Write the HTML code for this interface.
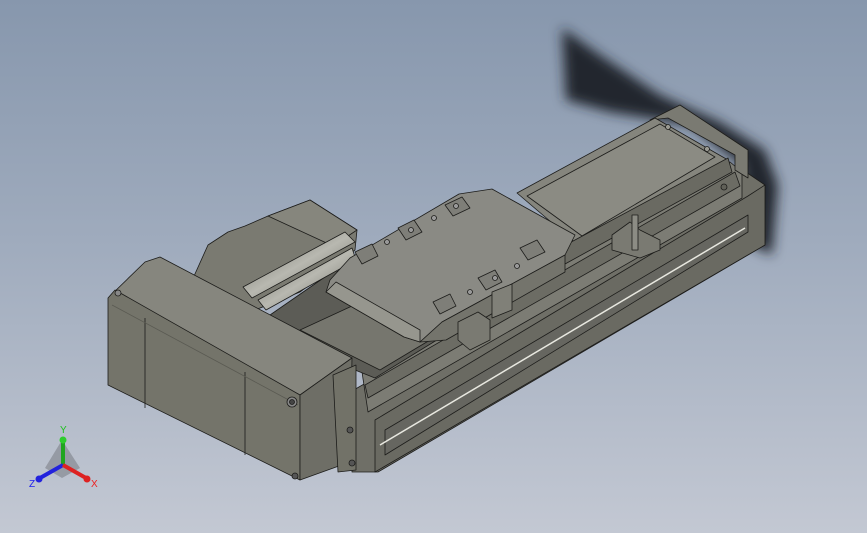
<!DOCTYPE html>
<html><head><meta charset="utf-8"><style>
html,body{margin:0;padding:0;width:867px;height:533px;overflow:hidden}
body{background:linear-gradient(180deg,#8797ad 0%,#9fabbd 45%,#c3c8d3 100%);font-family:"Liberation Sans",sans-serif}
svg{position:absolute;left:0;top:0}
</style></head><body>
<svg width="867" height="533" viewBox="0 0 867 533">
<defs>
<filter id="bl" x="-20%" y="-20%" width="140%" height="140%"><feGaussianBlur stdDeviation="6"/></filter>
<linearGradient id="cyl" x1="0" y1="0" x2="1" y2="1"><stop offset="0" stop-color="#66665e"/><stop offset=".5" stop-color="#b8b8b0"/><stop offset="1" stop-color="#66665e"/></linearGradient>
</defs>
<path d="M562,28 L600,55 L660,95 L720,122 L765,150 L778,185 L772,255 L742,240 L742,165 L690,125 L610,112 L566,100 Z" fill="#24272d" filter="url(#bl)"/>
<g stroke="#1c1c1a" stroke-width="0.8" stroke-linejoin="round">
<!-- base rail -->
<path d="M345,395 L740,168 L765,185 L765,245 L378,472 L352,472 L350,420 Z" fill="#6f6f67"/>
<path d="M375,472 L375,420 L748,196 L765,185 L765,245 Z" fill="#6a6a62"/>
<path d="M385,455 L385,430 L748,215 L748,232 Z" fill="#666660"/>
<path d="M380,445 L745,228" stroke="#e8e8e0" stroke-width="1.5"/>
<!-- upper rail body -->
<path d="M362,372 L730,162 L742,172 L742,198 L368,412 Z" fill="#7c7c74"/>
<path d="M365,385 L735,172 L740,186 L368,398 Z" fill="#6c6c64"/>
<!-- rail top near motor -->
<path d="M270,315 L335,270 L445,335 L375,378 L330,360 Z" fill="#5c5c56"/>
<path d="M300,330 L352,306 L430,340 L380,370 Z" fill="#76766e"/>
<!-- end cap -->
<path d="M650,120 L680,105 L748,150 L748,178 L735,170 L735,155 L668,118 Z" fill="#7a7a72"/>
<!-- top cover -->
<path d="M517,193 L655,118 L728,160 L578,245 Z" fill="#85857d"/>
<path d="M527,196 L660,124 L715,157 L582,236 Z" fill="#8b8b83"/>
<path d="M560,248 L728,158 L732,172 L565,264 Z" fill="#6a6a62"/>
<circle cx="668" cy="127" r="2.5" fill="#9a9a92"/><circle cx="707" cy="149" r="2.5" fill="#9a9a92"/>
<circle cx="724" cy="187" r="3" fill="#606058"/>
<!-- bracket right -->
<path d="M612,235 L630,222 L640,230 L660,240 L660,250 L640,258 L612,250 Z" fill="#7a7a72"/>
<path d="M632,215 L638,215 L638,250 L632,250 Z" fill="#8c8c84"/>
<!-- rear motor -->
<path d="M208,245 L228,232 L245,226 L268,216 L310,200 L357,230 L355,250 L335,265 L300,292 L250,312 L190,285 Z" fill="#7a7a71"/>
<path d="M268,216 L310,200 L357,230 L333,246 Z" fill="#86867d"/>
<path d="M243,287 L345,232 L355,242 L252,298 Z" fill="url(#cyl)"/>
<path d="M258,300 L352,248 L356,260 L266,310 Z" fill="url(#cyl)"/>
<!-- carriage -->
<path d="M350,258 L459,194 L492,189 L575,235 L565,255 L442,322 L420,342 L404,337 L326,292 L330,280 Z" fill="#8a8a84"/>
<path d="M442,322 L565,255 L565,272 L446,340 L420,342 Z" fill="#74746c"/>
<path d="M326,292 L404,337 L420,342 L420,330 L336,282 Z" fill="#96968e"/>
<g fill="#7e7e78">
<path d="M445,205 L462,197 L470,208 L453,216 Z"/><path d="M398,228 L414,220 L422,232 L406,240 Z"/>
<path d="M355,252 L372,244 L378,256 L362,264 Z"/><path d="M520,248 L537,240 L545,252 L528,260 Z"/>
<path d="M478,278 L495,270 L502,282 L486,290 Z"/><path d="M433,302 L450,294 L456,306 L440,314 Z"/>
</g>
<circle cx="456" cy="206" r="2.5" fill="#999"/><circle cx="434" cy="218" r="2.5" fill="#999"/><circle cx="411" cy="230" r="2.5" fill="#999"/>
<circle cx="387" cy="242" r="2.5" fill="#999"/><circle cx="517" cy="266" r="2.5" fill="#999"/><circle cx="495" cy="278" r="2.5" fill="#999"/><circle cx="470" cy="292" r="2.5" fill="#999"/>
<!-- sensor bracket -->
<path d="M458,322 L478,312 L490,320 L490,340 L470,350 L458,340 Z" fill="#7a7a72"/>
<path d="M492,292 L512,284 L512,310 L492,318 Z" fill="#808078"/>
<!-- motor front block -->
<path d="M110,296 L145,262 L160,257 L352,358 L300,395 Z" fill="#86867e"/>
<path d="M108,298 L115,290 L300,395 L300,480 L108,385 Z" fill="#74746a"/>
<path d="M145,318 L145,408 M245,372 L245,455" fill="none"/>
<path d="M112,305 L298,405" fill="none" stroke="#5a5a52"/>
<path d="M300,395 L352,358 L350,462 L300,480 Z" fill="#6e6e66"/>
<path d="M333,375 L356,365 L356,470 L338,472 Z" fill="#727268"/>
<circle cx="292" cy="402" r="5" fill="#888"/><circle cx="292" cy="402" r="2.5" fill="#444"/>
<circle cx="350" cy="430" r="3" fill="#555"/><circle cx="352" cy="463" r="3" fill="#555"/>
<circle cx="118" cy="293" r="3" fill="#888"/><circle cx="295" cy="476" r="3" fill="#555"/>
</g>
<!-- triad -->
<g>
<path d="M62,440 L45,468 L62,478 L80,468 Z" fill="#7d8088" opacity=".6"/>
<line x1="63" y1="465" x2="63" y2="440" stroke="#1fa51f" stroke-width="4"/>
<circle cx="63" cy="440" r="3.5" fill="#2ecc2e"/>
<line x1="63" y1="465" x2="40" y2="478" stroke="#2222dd" stroke-width="4"/>
<circle cx="39" cy="479" r="3.5" fill="#2222dd"/>
<line x1="63" y1="465" x2="86" y2="478" stroke="#dd2222" stroke-width="4"/>
<circle cx="87" cy="479" r="3.5" fill="#dd2222"/>
<text x="60" y="433" font-size="10" fill="#20c020" font-family="Liberation Sans">Y</text>
<text x="29" y="487" font-size="10" fill="#2020ee" font-family="Liberation Sans">Z</text>
<text x="91" y="487" font-size="10" fill="#ee2020" font-family="Liberation Sans">X</text>
</g>
</svg>
</body></html>
